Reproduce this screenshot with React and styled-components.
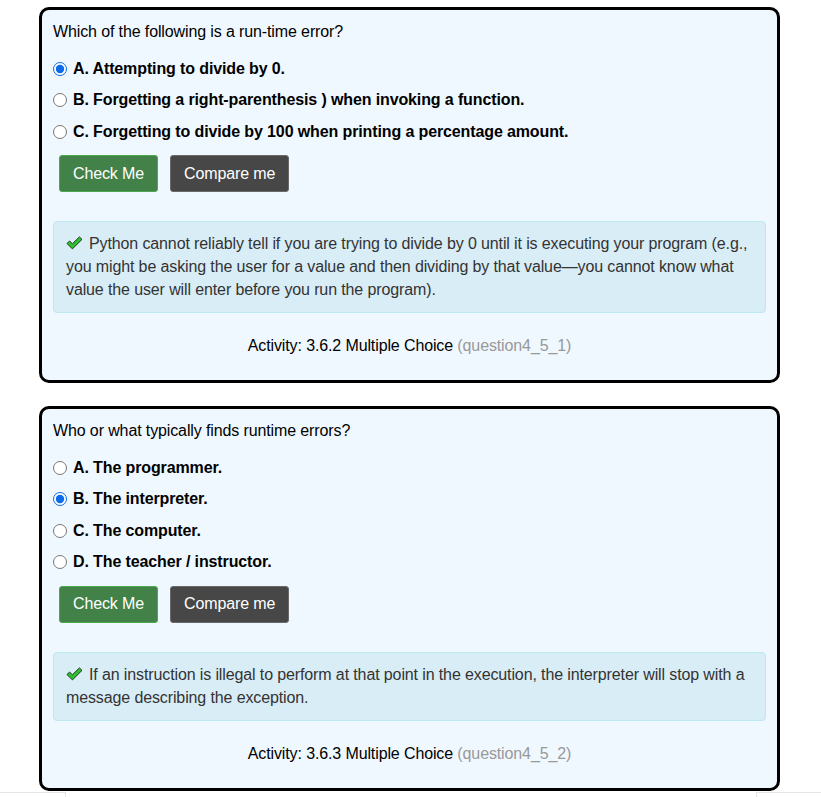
import styled, { createGlobalStyle } from "styled-components";

const GlobalStyle = createGlobalStyle`
  html, body {
    margin: 0;
    padding: 0;
    background: #ffffff;
  }
  body {
    font-family: "Liberation Sans", Arial, sans-serif;
    font-size: 16px;
    letter-spacing: -0.12px;
    color: #000;
  }
`;

const questions = [
  {
    id: "question4_5_1",
    activity: "3.6.2",
    prompt: "Which of the following is a run-time error?",
    options: [
      "A. Attempting to divide by 0.",
      "B. Forgetting a right-parenthesis ) when invoking a function.",
      "C. Forgetting to divide by 100 when printing a percentage amount.",
    ],
    selected: 0,
    feedback:
      "Python cannot reliably tell if you are trying to divide by 0 until it is executing your program (e.g., you might be asking the user for a value and then dividing by that value\u2014you cannot know what value the user will enter before you run the program).",
  },
  {
    id: "question4_5_2",
    activity: "3.6.3",
    prompt: "Who or what typically finds runtime errors?",
    options: [
      "A. The programmer.",
      "B. The interpreter.",
      "C. The computer.",
      "D. The teacher / instructor.",
    ],
    selected: 1,
    feedback:
      "If an instruction is illegal to perform at that point in the execution, the interpreter will stop with a message describing the exception.",
  },
];

const CheckIcon = () => (
  <svg width="17" height="14" viewBox="0 0 17 14" style={{ marginRight: 6, verticalAlign: "-1px" }}>
    <path
      d="M1 7.5 L3.6 5 L6.4 7.8 L13.4 0.9 L16 3.4 L6.4 12.9 Z"
      fill="#2fbf2f"
      stroke="#1f3a1f"
      strokeWidth="1"
      strokeLinejoin="round"
    />
  </svg>
);

const Page = () => (
  <Wrapper>
    {questions.map((q) => (
      <Card key={q.id}>
        <Prompt>{q.prompt}</Prompt>
        <OptionList>
          {q.options.map((opt, i) => (
            <Option key={opt}>
              <Radio type="radio" name={q.id} defaultChecked={i === q.selected} />
              {opt}
            </Option>
          ))}
        </OptionList>
        <ButtonRow>
          <Button $variant="success">Check Me</Button>
          <Button $variant="dark">Compare me</Button>
        </ButtonRow>
        <Feedback>
          <CheckIcon />
          {q.feedback}
        </Feedback>
        <Caption>
          Activity: {q.activity} Multiple Choice <Muted>({q.id})</Muted>
        </Caption>
      </Card>
    ))}
    <Footer>
      <FooterEdge />
      <FooterMiddle />
      <FooterEdge />
    </Footer>
  </Wrapper>
);

const Wrapper = styled.div`
  padding-top: 7px;
  display: flex;
  flex-direction: column;
  gap: 23px;
`;

const Card = styled.div`
  margin-left: 39px;
  width: 741px;
  box-sizing: border-box;
  border: 3px solid #000;
  border-radius: 10px;
  background: #f0f8ff;
  padding: 11px 11px 10px;
`;

const Prompt = styled.p`
  margin: 0 0 10px;
  line-height: 22px;
`;

const OptionList = styled.div`
  display: flex;
  flex-direction: column;
`;

const Option = styled.label`
  display: flex;
  align-items: center;
  height: 31.5px;
  font-weight: bold;
`;

const Radio = styled.input`
  width: 14px;
  height: 14px;
  margin: 0 6px 0 0;
  accent-color: #0b6bea;
`;

const ButtonRow = styled.div`
  display: flex;
  gap: 12px;
  padding-left: 6px;
  margin-top: 7.5px;
`;

const Button = styled.button`
  height: 37px;
  padding: 0 13px;
  font-family: "Liberation Sans", Arial, sans-serif;
  font-size: 16px;
  letter-spacing: -0.12px;
  color: #fff;
  border-radius: 3px;
  border: 1px solid ${(p) => (p.$variant === "success" ? "#4ca84f" : "#6a6a6a")};
  background: ${(p) => (p.$variant === "success" ? "#428248" : "#474747")};
  cursor: pointer;
`;

const Feedback = styled.div`
  margin-top: 29px;
  padding: 10px 12px 11px;
  line-height: 23px;
  color: #333;
  background: #d9edf7;
  border: 1px solid #bce8f1;
  border-radius: 4px;
`;

const Caption = styled.p`
  margin: 22px 0 13px;
  line-height: 22px;
  text-align: center;
`;

const Muted = styled.span`
  color: #999;
`;

const Footer = styled.div`
  display: flex;
  height: 10px;
  margin-top: -22px;
`;

const FooterEdge = styled.div`
  flex: 1;
  border-top: 1px solid #e6e6e6;
`;

const FooterMiddle = styled.div`
  width: 690px;
  border-left: 1px solid #e6e6e6;
  border-right: 1px solid #e6e6e6;
`;

export default function App() {
  return (
    <>
      <GlobalStyle />
      <Page />
    </>
  );
}
